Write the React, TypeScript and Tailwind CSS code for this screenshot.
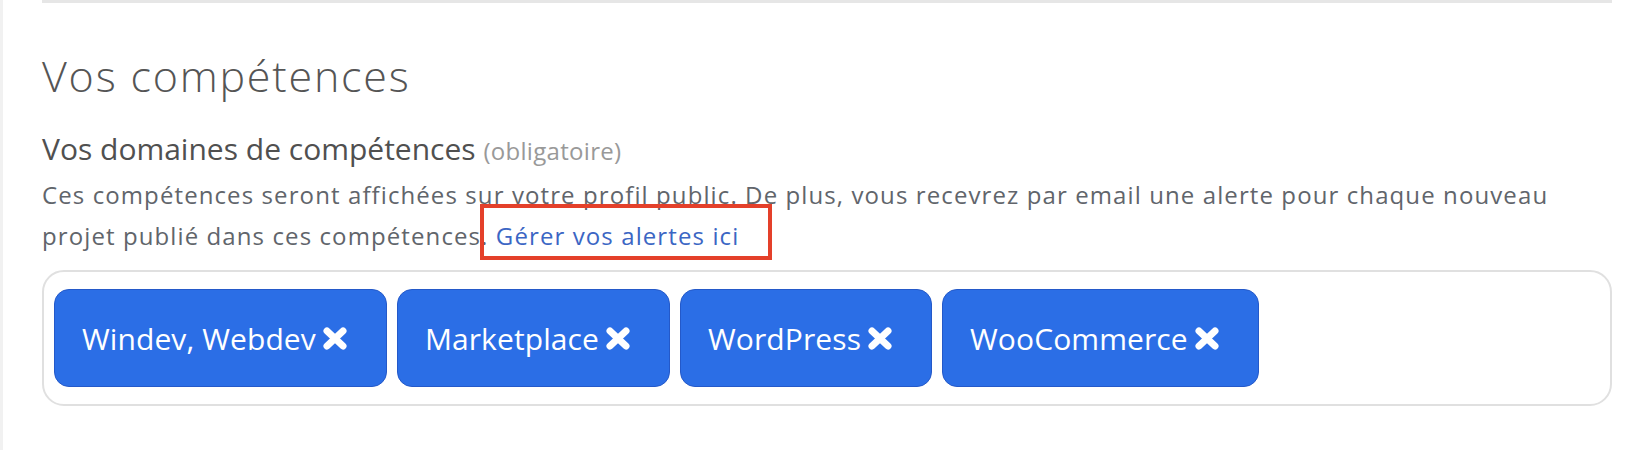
import React from 'react'

const skills = ['Windev, Webdev', 'Marketplace', 'WordPress', 'WooCommerce']

function CrossIcon() {
    return (
        <svg width="24" height="23" viewBox="0 0 24 23" className="shrink-0">
            <line x1="4" y1="4" x2="20" y2="19" stroke="white" strokeWidth="7" strokeLinecap="round" />
            <line x1="20" y1="4" x2="4" y2="19" stroke="white" strokeWidth="7" strokeLinecap="round" />
        </svg>
    )
}

export default function App() {
    return (
        <div className="min-h-[450px] w-[1636px] bg-white border-l-[3px] border-[#f1f1f1] font-['Open_Sans',sans-serif]">
            <div className="ml-[39px] w-[1570px] border-t-[3px] border-[#e6e6e6] pt-[47px]">
                <h2 className="text-[43px] leading-[52px] text-[#555555] font-light tracking-[1.8px]">
                    Vos compétences
                </h2>

                <div className="mt-[28px] text-[30px] leading-[38px] text-[#505050]">
                    Vos domaines de compétences{' '}
                    <span className="text-[24px] text-[#999999] tracking-[0.3px]">(obligatoire)</span>
                </div>

                <p className="mt-[4px] text-[24px] leading-[41px] text-[#61656b] tracking-[1.1px] whitespace-nowrap">
                    Ces compétences seront affichées sur votre profil public. De plus, vous recevrez par email une alerte pour chaque nouveau
                    <br />
                    projet publié dans ces compétences.{' '}
                    <a href="#" className="relative text-[#3b66c4] tracking-[1.1px]">
                        Gérer vos alertes ici
                        <span className="absolute left-[-16px] right-[-33px] top-[-15px] bottom-[-8px] border-[4px] border-[#e4402a]" />
                    </a>
                </p>

                <div className="mt-[14px] w-[1570px] h-[136px] rounded-[22px] border-2 border-[#e0e0e0] px-[10px] pt-[17px] flex gap-[10px] items-start">
                    {skills.map((skill) => (
                        <div
                            key={skill}
                            className="h-[98px] flex items-center gap-[7px] pl-[27px] pr-[39px] rounded-[15px] bg-[#2b6ee6] border border-[#2459c9] text-white text-[30px] tracking-[0.1px]"
                        >
                            <span>{skill}</span>
                            <CrossIcon />
                        </div>
                    ))}
                </div>
            </div>
        </div>
    )
}
